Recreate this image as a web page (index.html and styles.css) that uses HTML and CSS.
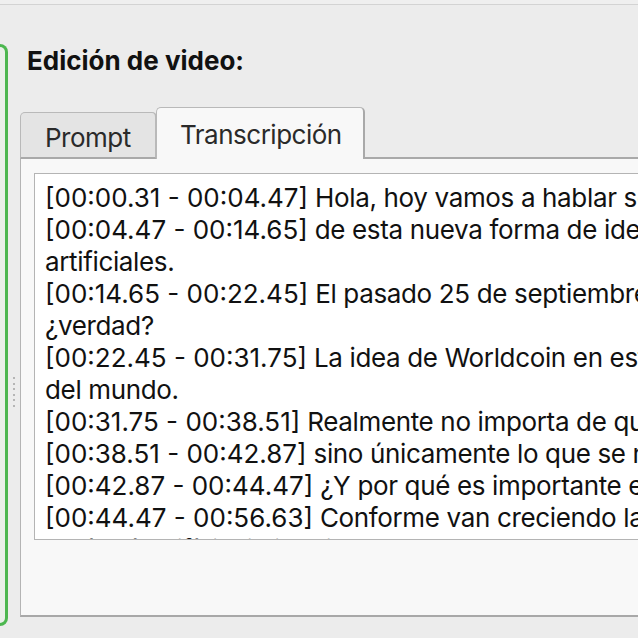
FILE: index.html
```html
<!DOCTYPE html>
<html>
  <head>
    <meta charset="utf-8">
    <meta name="viewport" content="width=device-width, initial-scale=1.0">
    <title>Edición de video</title>
    <link rel="stylesheet" href="styles.css">
  </head>
  <body>
  <div class="topline"></div>
  <div class="window">
    <div class="side">
      <div class="side__box"></div>
    </div>
    <div class="splitter">
      <span></span><span></span><span></span><span></span><span></span><span></span>
    </div>
    <main class="editor">
      <h2 class="editor__title">Edición de video:</h2>
      <div class="tabs">
        <div class="tab">Prompt</div>
        <div class="tab tab--active">Transcripción</div>
        <div class="tabs__fill"></div>
      </div>
      <div class="panel">
        <div class="transcript">
          <div class="line"><span class="ts">[00:00.31 - 00:04.47]</span> Hola, hoy vamos a hablar sobre Worldcoin y el proyecto de Sam Altman</div>
          <div class="line"><span class="ts">[00:04.47 - 00:14.65]</span> de esta nueva forma de identificarnos frente a las inteligencias</div>
          <div class="line">artificiales.</div>
          <div class="line"><span class="ts">[00:14.65 - 00:22.45]</span> El pasado 25 de septiembre se presentó el proyecto en España,</div>
          <div class="line">¿verdad?</div>
          <div class="line"><span class="ts">[00:22.45 - 00:31.75]</span> La idea de Worldcoin en esta versión es escanear el iris de la gente</div>
          <div class="line">del mundo.</div>
          <div class="line"><span class="ts">[00:31.75 - 00:38.51]</span> Realmente no importa de qué país seas o de dónde vengas,</div>
          <div class="line"><span class="ts">[00:38.51 - 00:42.87]</span> sino únicamente lo que se necesita es tu iris.</div>
          <div class="line"><span class="ts">[00:42.87 - 00:44.47]</span> ¿Y por qué es importante esto?</div>
          <div class="line"><span class="ts">[00:44.47 - 00:56.63]</span> Conforme van creciendo las inteligencias artificiales, cada vez</div>
          <div class="line">será más difícil distinguir entre una persona real y un bot en internet.</div>
        </div>
      </div>
    </main>
  </div>
  </body>
</html>
```

FILE: styles.css
```css
* {
  box-sizing: border-box;
  margin: 0;
}

body, html {
  margin: 0;
  width: 100%;
  height: 100vh;
  overflow: hidden;
}

body {
  display: flex;
  flex-direction: column;
  background: #ececec;
  font-family: Inter, "Liberation Sans", Arial, sans-serif;
  color: #111;
}

.topline {
  height: 5px;
  flex: none;
  background: #efefef;
  border-bottom: 1px solid #d3d3d3;
}

.window {
  flex: 1;
  display: flex;
  min-height: 0;
}

.side {
  width: 8px;
  flex: none;
  padding-top: 39px;
  padding-bottom: 12px;
}

.side__box {
  height: 100%;
  background: #e9f0e9;
  border: 3px solid #4cb74f;
  border-left: none;
  border-radius: 0 9px 9px 0;
}

.splitter {
  width: 12px;
  flex: none;
  display: flex;
  flex-direction: column;
  align-items: center;
  gap: 3.6px;
  padding-top: 372px;
}

.splitter span {
  width: 2px;
  height: 2px;
  background: #b5b5b5;
}

.editor {
  flex: 1;
  display: flex;
  flex-direction: column;
  min-width: 0;
  padding-bottom: 21px;
}

.editor__title {
  font-size: 26px;
  font-weight: 700;
  line-height: 32px;
  margin-top: 40px;
  padding-left: 7px;
  color: #111;
}

.tabs {
  display: flex;
  align-items: flex-end;
  flex: none;
  margin-top: 30px;
  height: 52px;
}

.tab {
  width: 137px;
  height: 47px;
  padding-left: 24px;
  font-size: 26px;
  line-height: 49px;
  letter-spacing: -0.5px;
  color: #2a2a2a;
  background: #e4e4e4;
  border: 1px solid #b9b9b9;
  border-bottom: 2px solid #a9a9a9;
  border-right-width: 2px;
  border-radius: 5px 5px 0 0;
}

.tab--active {
  width: 209px;
  height: 52px;
  padding-left: 23px;
  line-height: 54px;
  background: #f8f8f8;
  border: 1px solid #b9b9b9;
  border-right: 2px solid #a9a9a9;
  border-bottom: none;
  margin-left: -1px;
}

.tabs__fill {
  flex: 1;
  height: 2px;
  background: #a9a9a9;
}

.panel {
  flex: 1;
  min-height: 0;
  min-width: 700px;
  display: flex;
  flex-direction: column;
  background: #f8f8f8;
  border-left: 1px solid #b4b4b4;
  border-bottom: 2px solid #a8a8a8;
  padding: 14px 0 75px 13px;
}

.transcript {
  flex: 1;
  min-height: 0;
  background: #fff;
  border: 1px solid #b4b4b4;
  overflow: hidden;
  padding: 8px 0 0 10px;
}

.line {
  font-size: 26px;
  line-height: 32px;
  letter-spacing: -0.35px;
  white-space: nowrap;
  color: #111;
}

.line .ts {
  letter-spacing: 0;
}
```
